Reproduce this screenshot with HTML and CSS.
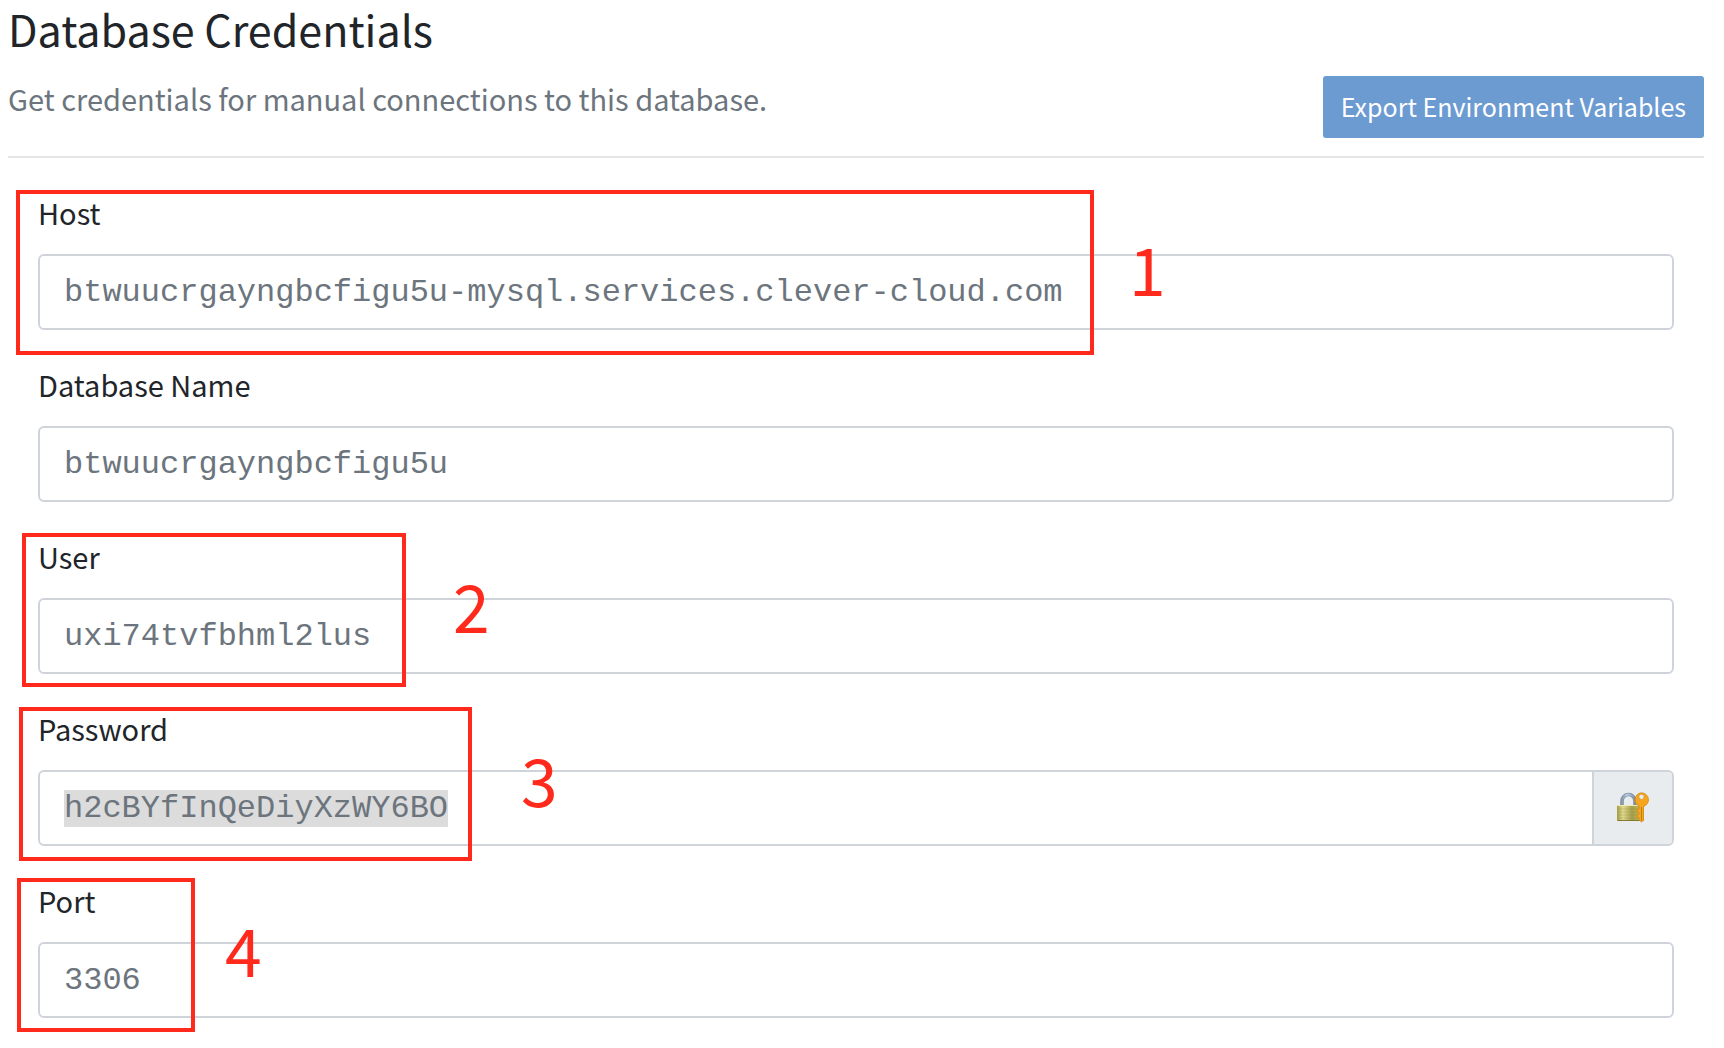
FILE: index.html
```html
<!DOCTYPE html>
<html lang="en">
<head>
<meta charset="utf-8">
<title>Database Credentials</title>
<link rel="stylesheet" href="styles.css">
</head>
<body>
<main class="page">
  <h1 class="title">Database Credentials</h1>
  <div class="intro">
    <p class="lead">Get credentials for manual connections to this database.</p>
    <button class="export" type="button">Export Environment Variables</button>
  </div>
  <form class="fields">
    <div class="field">
      <label class="label" for="host">Host</label>
      <div class="control"><input class="value" id="host" type="text" readonly value="btwuucrgayngbcfigu5u-mysql.services.clever-cloud.com"></div>
      <div class="mark mark-host"></div>
      <span class="digit digit-host">1</span>
    </div>
    <div class="field">
      <label class="label" for="name">Database Name</label>
      <div class="control"><input class="value" id="name" type="text" readonly value="btwuucrgayngbcfigu5u"></div>
    </div>
    <div class="field">
      <label class="label" for="user">User</label>
      <div class="control"><input class="value" id="user" type="text" readonly value="uxi74tvfbhml2lus"></div>
      <div class="mark mark-user"></div>
      <span class="digit digit-user">2</span>
    </div>
    <div class="field">
      <label class="label" for="password">Password</label>
      <div class="control">
        <div class="slot"><input class="value value-selected" id="password" type="text" readonly value="h2cBYfInQeDiyXzWY6BO"></div>
        <button class="reveal" type="button" aria-label="Toggle password">
          <svg class="lock" viewBox="0 0 32 32" aria-hidden="true">
            <defs>
              <linearGradient id="brass" x1="0" x2="1" y1="0" y2="0">
                <stop offset="0" stop-color="#a39b43"/>
                <stop offset=".22" stop-color="#e2dc91"/>
                <stop offset=".55" stop-color="#a89f4c"/>
                <stop offset="1" stop-color="#c9c067"/>
              </linearGradient>
              <linearGradient id="steel" x1="0" x2="1" y1="0" y2="0">
                <stop offset="0" stop-color="#8998a8"/>
                <stop offset=".4" stop-color="#b9d3ec"/>
                <stop offset="1" stop-color="#7d8c9c"/>
              </linearGradient>
            </defs>
            <path d="M5 15V9a6.500 6.500 0 0 1 13 0V15" fill="none" stroke="#7f8e9e" stroke-width="3.600"/>
            <path d="M5 15V9a6.500 6.500 0 0 1 13 0V15" fill="none" stroke="url(#steel)" stroke-width="2.200"/>
            <rect x="0" y="13" width="27" height="16" rx="1.500" fill="url(#brass)"/>
            <path d="M.5 13.500h26" stroke="#f0ebb0"/>
            <path d="M.5 28.500h26" stroke="#837a32"/>
            <path d="M1 17h25M1 20h25M1 23h25M1 26h25" stroke="#7e772f" stroke-opacity=".25"/>
            <path d="M24.500 .8a7 7 0 0 1 2 13.700v13.700L24.500 30 22 28v-2l-2-1v-2l2-1v-1l-2-1v-2l2-1v-3A7 7 0 0 1 24.500 .8Z" fill="#f5a51e" stroke="#d58a10" stroke-width=".8"/>
            <path d="M24.500 15v13.500" stroke="#bf7c12"/>
            <circle cx="24.500" cy="4.800" r="2.600" fill="#e9ecef" stroke="#d58a10" stroke-width=".6"/>
          </svg>
        </button>
      </div>
      <div class="mark mark-password"></div>
      <span class="digit digit-password">3</span>
    </div>
    <div class="field">
      <label class="label" for="port">Port</label>
      <div class="control"><input class="value" id="port" type="text" readonly value="3306"></div>
      <div class="mark mark-port"></div>
      <span class="digit digit-port">4</span>
    </div>
  </form>
</main>
</body>
</html>
```
FILE: styles.css
```css
* { box-sizing: border-box; }

body {
  margin: 0;
  background: #fff;
  color: #212529;
  font-family: "Source Sans Pro", "Noto Sans CJK SC", sans-serif;
  font-size: 29px;
}

.page { padding: 0 20px 16px 8px; }

.title {
  margin: 0 0 20px;
  font-size: 43px;
  font-weight: 400;
  line-height: 56px;
}

.intro {
  display: flex;
  justify-content: space-between;
  align-items: flex-start;
  gap: 24px;
  padding-bottom: 18px;
  border-bottom: 2px solid #e5e5e5;
}

.lead {
  margin: 0;
  color: #6c757d;
  line-height: 44px;
}

.export {
  flex: none;
  height: 62px;
  padding: 0 18px 2px;
  border: 0;
  border-radius: 3px;
  background: #6c9bd2;
  color: #fff;
  font-family: inherit;
  font-size: 25px;
}

.fields {
  display: flex;
  flex-direction: column;
  gap: 30px;
  padding: 30px 30px 0;
}

.field {
  position: relative;
  display: flex;
  flex-direction: column;
  gap: 18px;
}

.label { line-height: 48px; }

.control {
  display: flex;
  height: 76px;
  border: 2px solid #ced4da;
  border-radius: 6px;
  overflow: hidden;
}

.value {
  flex: 1;
  min-width: 0;
  padding: 0 24px;
  border: 0;
  outline: 0;
  background: transparent;
  color: #6c757d;
  font-family: "Courier New", "Liberation Mono", monospace;
  font-size: 32px;
}

.slot {
  flex: 1;
  display: flex;
  align-items: center;
  min-width: 0;
  padding: 0 24px;
}

.value-selected {
  flex: none;
  field-sizing: content;
  height: 37px;
  padding: 0;
  background: #dcdcdc;
}

.reveal {
  display: flex;
  align-items: center;
  justify-content: center;
  width: 80px;
  padding: 0;
  border: 0;
  border-left: 2px solid #ced4da;
  background: #e9ecef;
}

.lock { width: 32px; height: 32px; }

/* Numbered callouts drawn over the form */
.mark {
  position: absolute;
  border: 4px solid #ff2a1c;
  pointer-events: none;
}

.mark-host { left: -22px; top: 2px; width: 1078px; height: 165px; }
.mark-user { left: -16px; top: 1px; width: 384px; height: 154px; }
.mark-password { left: -19px; top: 3px; width: 453px; height: 154px; }
.mark-port { left: -21px; top: 2px; width: 178px; height: 154px; }

.digit {
  position: absolute;
  color: #ff2a1c;
  font-size: 66px;
  line-height: 66px;
  pointer-events: none;
}

.digit-host { left: 1091px; top: 46px; }
.digit-user { left: 415px; top: 39px; }
.digit-password { left: 483px; top: 41px; }
.digit-port { left: 187px; top: 39px; }
```
